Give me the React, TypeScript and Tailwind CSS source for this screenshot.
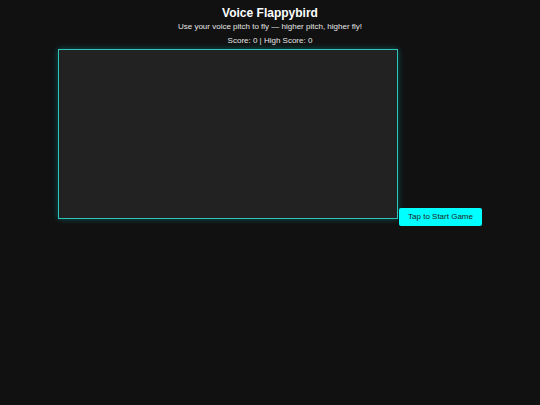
import React from "react";

export default function App() {
  return (
    <div
      className="min-h-[405px] w-[540px] bg-[#111111] text-center text-[8px] leading-[10px] text-white"
      style={{ fontFamily: '"Liberation Sans", Arial, sans-serif' }}
    >
      <h1 className="pt-[6px] text-[12px] font-bold leading-[14px]">Voice Flappybird</h1>
      <p className="mt-[2px] text-[8px] leading-[10px] text-[#e6e6e6]">
        Use your voice pitch to fly — higher pitch, higher fly!
      </p>
      <p className="mt-[4px] text-[8px] leading-[10px] text-[#e6e6e6]">Score: 0 | High Score: 0</p>
      <div className="mt-[3px]">
        <div className="inline-block h-[170px] w-[340px] border border-[#2cc6bc] bg-[#222222] align-baseline shadow-[0_0_6px_rgba(0,220,210,0.35)]"></div>
        <button className="ml-[1px] inline-block rounded-[2px] bg-[#00ffff] px-[9px] py-[4px] text-[8px] leading-[10px] text-[#222222]">
          Tap to Start Game
        </button>
      </div>
    </div>
  );
}
